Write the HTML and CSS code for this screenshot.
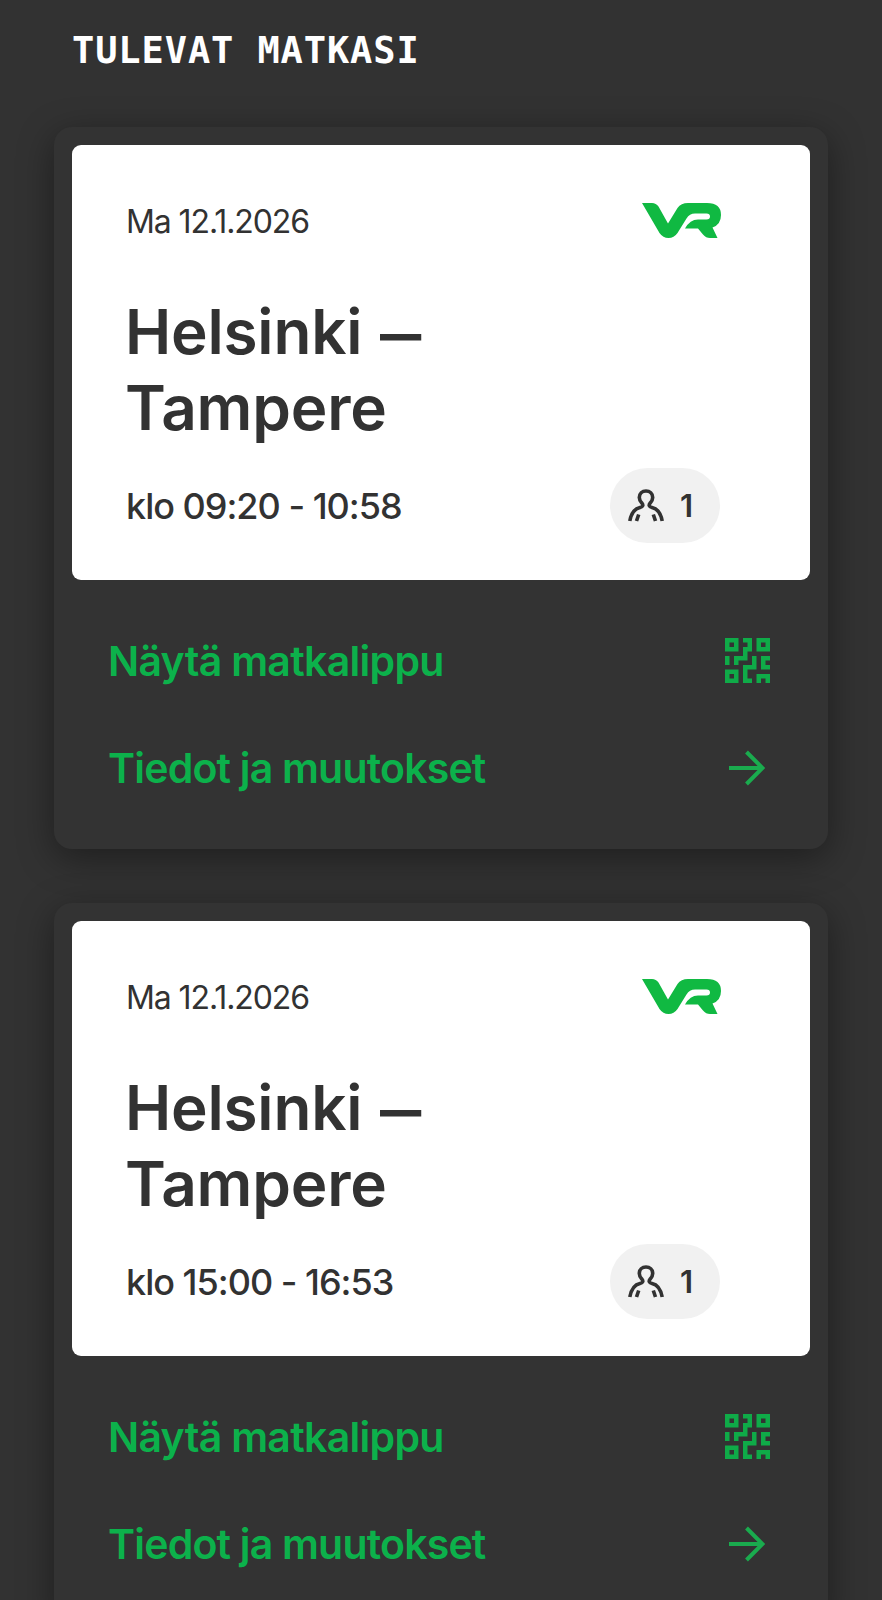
FILE: index.html
```
<!DOCTYPE html>
<html lang="fi">
<head>
    <meta charset="UTF-8">
    <meta name="viewport" content="width=device-width, initial-scale=1.0">
    <title>Tulevat matkasi</title>
    <link rel="stylesheet" href="styles.css">
</head>
<body>
    <!-- shared icons -->
    <svg class="sprite" width="0" height="0" aria-hidden="true">
        <symbol id="vr-logo" viewBox="0 0 79 35">
            <path d="M0 0H10Q14 0 16.500 3.500L26 20.500L35.500 5Q39 0 46 0H65Q79 0 79 12Q79 21.500 70.500 24.500L75.500 35H68Q64 35 61 31.500L56 25.500H43Q48 16.500 56 16.500H64.500Q68 16.500 68 13.500Q68 10.500 64.500 10.500H53Q47.500 10.500 44.500 15.500L35.500 30Q32 35 26.500 35Q21 35 17.500 30Z"/>
        </symbol>
        <symbol id="person" viewBox="0 0 36 33">
            <path d="M1.800 32C3.500 23 7 19.500 12 18.500C15.200 17.800 15.500 16 13.800 14C12 12 11.300 10.500 11.300 8.500C11.300 4.500 14.200 2 18 2S24.700 4.500 24.700 8.500C24.700 10.500 24 12 22.200 14C20.500 16 20.800 17.800 24 18.500C29 19.500 32.500 23 34.200 32M8.500 32L10.700 25.500M27.500 32L25.300 25.500"/>
        </symbol>
        <symbol id="qr" viewBox="0 0 10 10">
            <path fill-rule="evenodd" d="M0 0h3v3h-3zM1 1v1h1v-1zM7 0h3v3h-3zM8 1v1h1v-1zM0 7h3v3h-3zM1 8v1h1v-1z"/>
            <path d="M4 0h2v3h-1v2h-2v1h-1v-2h2v-2h1v-1h-1zM0 4h1v2h-1zM6 4h1v3h-2v2h1v1h-2v-4h2zM8 4h2v1h-1v1h1v1h-2zM7 8h3v2h-1v-1h-1v1h-1z"/>
        </symbol>
        <symbol id="arrow" viewBox="0 0 36 36">
            <path d="M0 18H33M17.500 2L33.500 18L17.500 34"/>
        </symbol>
    </svg>

    <h1 class="page-title">Tulevat matkasi</h1>

    <main class="trips">
        <article class="card">
            <div class="ticket">
                <div class="ticket-top">
                    <span class="date">Ma 12.1.2026</span>
                    <svg class="logo"><use href="#vr-logo"/></svg>
                </div>
                <h2 class="route">Helsinki <span class="dash">–</span><br>Tampere</h2>
                <div class="ticket-bottom">
                    <span class="time">klo 09:20 - 10:58</span>
                    <span class="passengers"><svg class="person"><use href="#person"/></svg>1</span>
                </div>
            </div>
            <nav class="actions">
                <a class="action"><span class="show">Näytä matkalippu</span><svg class="qr"><use href="#qr"/></svg></a>
                <a class="action"><span>Tiedot ja muutokset</span><svg class="arrow"><use href="#arrow"/></svg></a>
            </nav>
        </article>

        <article class="card">
            <div class="ticket">
                <div class="ticket-top">
                    <span class="date">Ma 12.1.2026</span>
                    <svg class="logo"><use href="#vr-logo"/></svg>
                </div>
                <h2 class="route">Helsinki <span class="dash">–</span><br>Tampere</h2>
                <div class="ticket-bottom">
                    <span class="time">klo 15:00 - 16:53</span>
                    <span class="passengers"><svg class="person"><use href="#person"/></svg>1</span>
                </div>
            </div>
            <nav class="actions">
                <a class="action"><span class="show">Näytä matkalippu</span><svg class="qr"><use href="#qr"/></svg></a>
                <a class="action"><span>Tiedot ja muutokset</span><svg class="arrow"><use href="#arrow"/></svg></a>
            </nav>
        </article>
    </main>
</body>
</html>
```
FILE: styles.css
```
* {
    box-sizing: border-box;
}

body {
    margin: 0;
    height: 1600px;
    overflow: hidden;
    background: #323232;
    color: #323232;
    font-family: Inter, "Liberation Sans", sans-serif;
}

.sprite {
    position: absolute;
}

.page-title {
    margin: 0 0 26px;
    padding-left: 72px;
    line-height: 101px;
    color: #fff;
    font-family: "DejaVu Sans Mono", monospace;
    font-size: 37px;
    font-weight: 700;
    letter-spacing: 0.9px;
    text-transform: uppercase;
}

.trips {
    display: flex;
    flex-direction: column;
    gap: 54px;
    padding: 0 54px;
}

.card {
    height: 722px;
    padding: 18px;
    border-radius: 18px;
    background: #333;
    box-shadow: 0 9px 36px rgba(0, 0, 0, 0.4);
}

.ticket {
    height: 435px;
    padding: 54px 89px 36px 54px;
    border-radius: 9px;
    background: #fff;
}

.ticket-top,
.ticket-bottom {
    display: flex;
    align-items: center;
    justify-content: space-between;
}

.ticket-top {
    height: 44px;
}

.date {
    font-size: 32px;
    letter-spacing: -1.1px;
}

.logo {
    width: 79px;
    height: 35px;
    margin-bottom: 2px;
    fill: #10b942;
}

.route {
    margin: 51px 0 22px -1px;
    font-size: 62px;
    font-weight: 600;
    line-height: 76px;
    letter-spacing: -0.2px;
}

.dash {
    display: inline-block;
    margin-left: 2px;
    transform: translateY(2px) scaleX(1.33);
    transform-origin: left;
}

.ticket-bottom {
    height: 75px;
}

.time {
    font-size: 36px;
    font-weight: 500;
    letter-spacing: -1px;
}

.passengers {
    display: flex;
    align-items: center;
    gap: 16px;
    width: 110px;
    height: 75px;
    margin-right: 1px;
    padding-left: 18px;
    border-radius: 38px;
    background: #f1f1f1;
    font-size: 31px;
    font-weight: 600;
}

.person {
    width: 36px;
    height: 33px;
    fill: none;
    stroke: #323232;
    stroke-width: 3.6;
}

.actions {
    padding: 27px 36px 0;
}

.action {
    display: flex;
    align-items: center;
    justify-content: space-between;
    height: 107.5px;
    color: #0cb14b;
    font-size: 41px;
    font-weight: 600;
    letter-spacing: -0.8px;
}

.show {
    letter-spacing: -0.7px;
}

.qr {
    width: 45px;
    height: 45px;
    margin-right: 4px;
    fill: #0fab48;
}

.arrow {
    width: 36px;
    height: 36px;
    margin-right: 9px;
    fill: none;
    stroke: #1aab4e;
    stroke-width: 4;
}
```
